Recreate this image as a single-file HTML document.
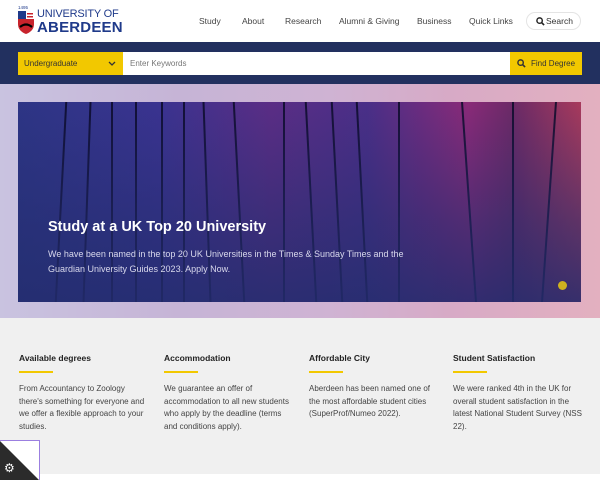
<!DOCTYPE html><html><head><style>
*{margin:0;padding:0;box-sizing:border-box}
body{width:600px;height:480px;overflow:hidden;font-family:"Liberation Sans",sans-serif;background:#fff;position:relative}
.hdr{height:42px;position:relative;background:#fff}
.nav{position:absolute;top:16px;font-size:8.5px;color:#444}
.srch{position:absolute;left:526px;top:12px;width:55px;height:18px;border:1px solid #e4e4e4;border-radius:9px;font-size:8.5px;color:#333;padding:3px 0 0 19px}
.band{position:absolute;top:42px;left:0;width:600px;height:42px;background:#22305f}
.sel{position:absolute;left:18px;top:10px;width:105px;height:23px;background:#f2c800;font-size:8px;color:#333;padding:7px 0 0 6px}
.kw{position:absolute;left:123px;top:10px;width:387px;height:23px;background:#fff;font-size:8px;color:#777;padding:7px 0 0 7px}
.fd{position:absolute;left:510px;top:10px;width:72px;height:23px;background:#f2c800;font-size:8px;color:#333;padding:7px 0 0 21px}
.bg{position:absolute;top:84px;left:0;width:600px;height:234px;background:linear-gradient(90deg,#c9c3e0 0%,#c6b4d6 30%,#cfb3d3 55%,#d7aac6 75%,#e3b0c0 100%)}
.card{position:absolute;left:18px;top:102px;width:563px;height:200px;overflow:hidden;
background:linear-gradient(90deg,#2d3585 0%,#3a3390 25%,#5b2d85 45%,#4a2f88 62%,#8a2a78 80%,#6b2a66 88%,#a83a5c 100%)}
.card .shade{position:absolute;inset:0;background:linear-gradient(180deg,rgba(40,40,110,0) 0%,rgba(35,45,110,.55) 60%,rgba(35,45,110,.85) 100%)}
.ln{position:absolute;top:-5px;height:210px;width:1.5px;background:rgba(10,10,40,.85)}
.card h1{position:absolute;left:30px;top:117px;color:#fff;font-size:14.5px;font-weight:bold}
.card p{position:absolute;left:30px;top:145px;color:#d8d8ec;font-size:9px;line-height:15px;width:380px}
.dot{position:absolute;left:540px;top:179px;width:9px;height:9px;border-radius:50%;background:#cfb11e}
.gray{position:absolute;top:318px;left:0;width:600px;height:156px;background:#f0f0f0}
.col{position:absolute;top:35px;width:130px}
.col h3{font-size:8.5px;color:#222;font-weight:bold}
.col .u{width:34px;height:2px;background:#f2c800;margin:8px 0 10px}
.col p{font-size:8px;color:#444;line-height:12.5px}
.ck{position:absolute;left:0;top:440px;width:40px;height:40px;border:1.5px solid #9b7fe0;border-left:none;border-bottom:none;overflow:hidden;background:#fff}
.ck div{position:absolute;left:0;top:0;width:0;height:0;border-bottom:40px solid #2b2b2b;border-right:40px solid transparent}
.mg{position:absolute}
</style></head><body>
<div class="hdr">
<svg style="position:absolute;left:18px;top:5px" width="16" height="30" viewBox="0 0 16 30"><text x="0" y="4" font-size="4.5" fill="#1f3a8a" font-family="Liberation Sans">1495</text><path d="M0 6h16v13q0 7-8 10q-8-3-8-10z" fill="#c8232c"/><rect x="0" y="6" width="8" height="8" fill="#1f3a8a"/><rect x="8" y="6" width="8" height="8" fill="#fff"/><rect x="9" y="8" width="6" height="1.5" fill="#c8232c"/><rect x="9" y="11" width="6" height="1.5" fill="#c8232c"/><path d="M2 22q6-5 12 0" stroke="#000" stroke-width="2.2" fill="none"/></svg>
<div style="position:absolute;left:37px;top:9px;color:#1f3a8a;font-size:11px;line-height:11px;letter-spacing:-.2px">UNIVERSITY OF</div>
<div style="position:absolute;left:37px;top:19px;color:#1f3a8a;font-size:15px;font-weight:bold;letter-spacing:.2px">ABERDEEN</div>
<span class="nav" style="left:199px">Study</span><span class="nav" style="left:242px">About</span><span class="nav" style="left:285px">Research</span><span class="nav" style="left:339px">Alumni &amp; Giving</span><span class="nav" style="left:417px">Business</span><span class="nav" style="left:469px">Quick Links</span>
<div class="srch"><svg class="mg" style="left:9px;top:4px" width="9" height="9" viewBox="0 0 10 10"><circle cx="4" cy="4" r="3" stroke="#222" stroke-width="1.6" fill="none"/><path d="M6.2 6.2L9 9" stroke="#222" stroke-width="1.8"/></svg>Search</div>
</div>
<div class="band"><div class="sel">Undergraduate<svg class="mg" style="left:90px;top:9px" width="8" height="6" viewBox="0 0 8 6"><path d="M1 1l3 3 3-3" stroke="#333" stroke-width="1.3" fill="none"/></svg></div><div class="kw">Enter Keywords</div><div class="fd"><svg class="mg" style="left:7px;top:7px" width="9" height="9" viewBox="0 0 10 10"><circle cx="4" cy="4" r="3" stroke="#333" stroke-width="1.6" fill="none"/><path d="M6.2 6.2L9 9" stroke="#333" stroke-width="1.8"/></svg>Find Degree</div></div>
<div class="bg"></div>
<div class="card">
<div class="ln" style="left:42px;transform:rotate(3deg)"></div><div class="ln" style="left:68px;transform:rotate(2deg)"></div><div class="ln" style="left:93px"></div><div class="ln" style="left:117px"></div><div class="ln" style="left:143px"></div><div class="ln" style="left:165px"></div><div class="ln" style="left:188px;transform:rotate(-2deg)"></div><div class="ln" style="left:220px;transform:rotate(-3deg)"></div><div class="ln" style="left:265px"></div><div class="ln" style="left:292px;transform:rotate(-3deg)"></div><div class="ln" style="left:318px;transform:rotate(-3deg)"></div><div class="ln" style="left:343px;transform:rotate(-3deg)"></div><div class="ln" style="left:380px"></div><div class="ln" style="left:450px;transform:rotate(-4deg)"></div><div class="ln" style="left:494px"></div><div class="ln" style="left:530px;transform:rotate(4deg)"></div>
<div class="shade"></div>
<h1>Study at a UK Top 20 University</h1>
<p>We have been named in the top 20 UK Universities in the Times &amp; Sunday Times and the Guardian University Guides 2023. Apply Now.</p>
<div class="dot"></div>
</div>
<div class="gray">
<div class="col" style="left:19px"><h3>Available degrees</h3><div class="u"></div><p>From Accountancy to Zoology there's something for everyone and we offer a flexible approach to your studies.</p></div>
<div class="col" style="left:164px"><h3>Accommodation</h3><div class="u"></div><p>We guarantee an offer of accommodation to all new students who apply by the deadline (terms and conditions apply).</p></div>
<div class="col" style="left:309px"><h3>Affordable City</h3><div class="u"></div><p>Aberdeen has been named one of the most affordable student cities (SuperProf/Numeo 2022).</p></div>
<div class="col" style="left:453px"><h3>Student Satisfaction</h3><div class="u"></div><p>We were ranked 4th in the UK for overall student satisfaction in the latest National Student Survey (NSS 22).</p></div>
</div>
<div class="ck"><div></div><span style="position:absolute;left:4px;top:20px;color:#fff;font-size:12px">⚙</span></div>
</body></html>
